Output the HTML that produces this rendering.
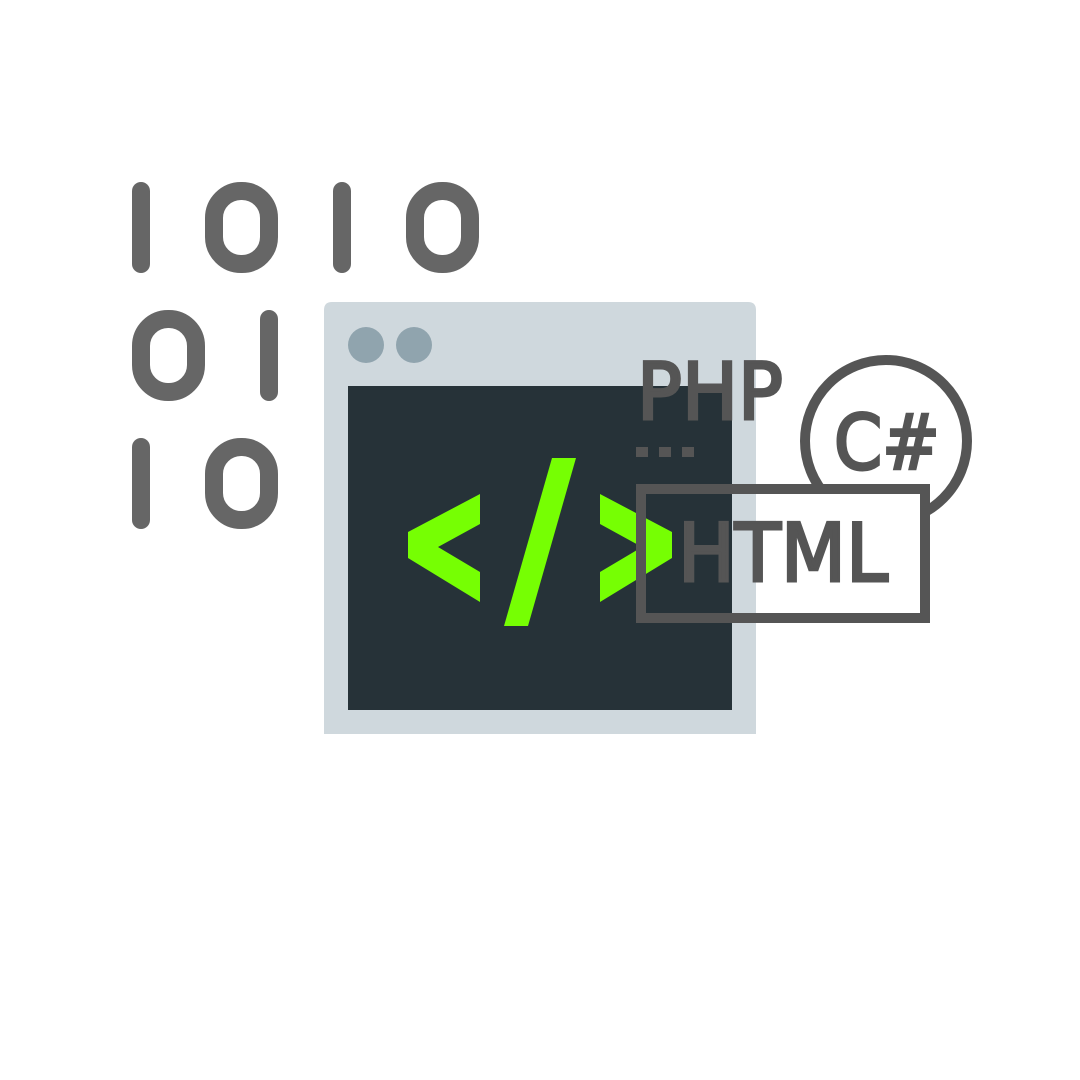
<!DOCTYPE html>
<html><head><meta charset="utf-8"><style>
html,body{margin:0;padding:0;background:#fff;}
svg{display:block}
text{font-family:"DejaVu Sans","Liberation Sans",sans-serif;font-weight:normal;fill:#555;stroke:#555;stroke-width:3}
</style></head><body>
<svg width="1080" height="1080" viewBox="0 0 1080 1080">
<rect width="1080" height="1080" fill="#fff"/>
<g fill="#666">
<rect x="132" y="182" width="18" height="91" rx="9"/>
<rect x="333" y="182" width="18" height="91" rx="9"/>
<rect x="260" y="310" width="18" height="91" rx="9"/>
<rect x="132" y="438" width="18" height="91" rx="9"/>
</g>
<g fill="none" stroke="#666" stroke-width="18">
<rect x="214" y="191" width="55" height="73" rx="27"/>
<rect x="415" y="191" width="55" height="73" rx="27"/>
<rect x="141" y="319" width="55" height="73" rx="27"/>
<rect x="214" y="447" width="55" height="73" rx="27"/>
</g>
<path d="M332 302 H748 Q756 302 756 310 V734 H324 V310 Q324 302 332 302 Z" fill="#cfd8dd"/>
<circle cx="366" cy="345" r="18" fill="#90a4ae"/>
<circle cx="414" cy="345" r="18" fill="#90a4ae"/>
<rect x="348" y="386" width="384" height="324" fill="#263238"/>
<g fill="#76ff03">
<polygon points="480,494 408,532 408,558 480,602 480,572 438,547 480,524"/>
<polygon points="552,458 576,458 528,626 504,626"/>
<polygon points="600,494 672,532 672,558 600,602 600,572 642,547 600,524"/>
</g>
<circle cx="886" cy="441" r="81" fill="#fff" stroke="#555" stroke-width="10"/>
<text x="834" y="469" font-size="76" textLength="106" lengthAdjust="spacingAndGlyphs">C#</text>
<rect x="756" y="494" width="164" height="119" fill="#fff"/>
<rect x="641" y="489" width="284" height="129" fill="none" stroke="#555" stroke-width="10"/>
<text x="637" y="419" font-size="78" textLength="146" lengthAdjust="spacingAndGlyphs">PHP</text>
<g fill="#555">
<rect x="636" y="447" width="12" height="10"/>
<rect x="659" y="447" width="12" height="10"/>
<rect x="682" y="447" width="12" height="10"/>
</g>
<text x="678" y="581" font-size="80" textLength="210" lengthAdjust="spacingAndGlyphs">HTML</text>
</svg>
</body></html>
